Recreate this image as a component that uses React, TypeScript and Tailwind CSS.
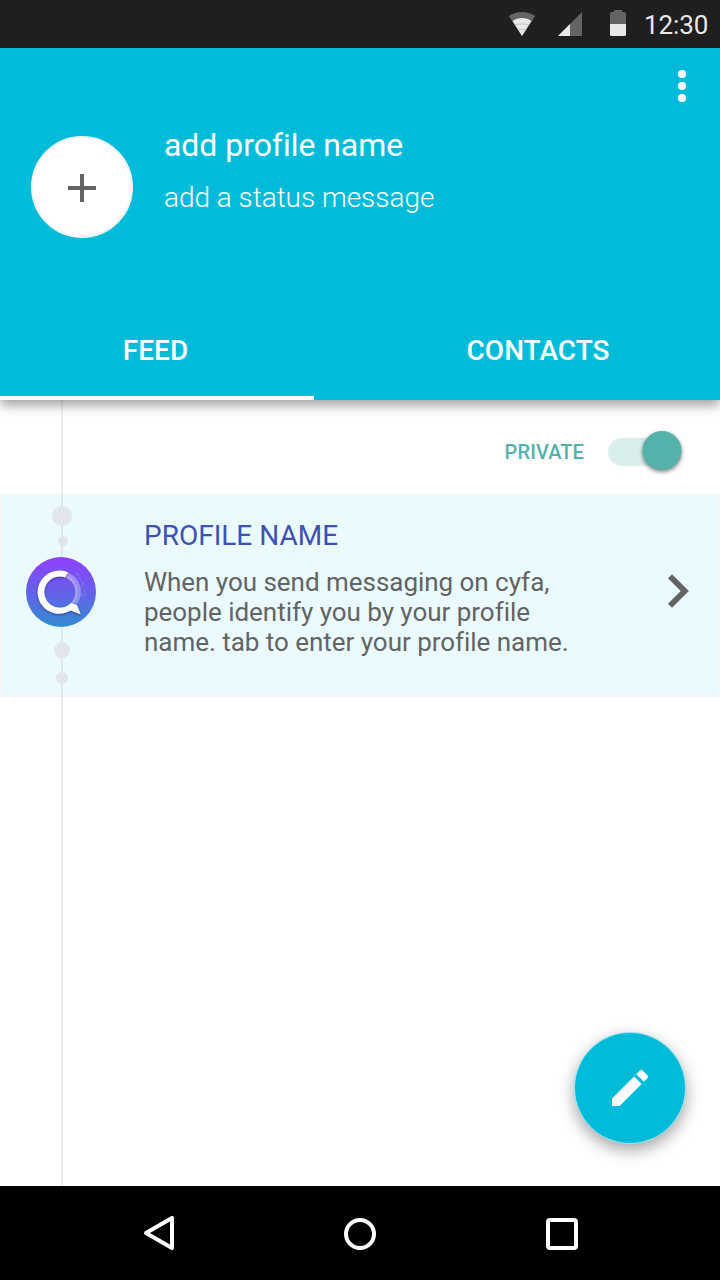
import React from "react";

function StatusBar() {
  return (
    <div className="flex h-12 shrink-0 items-center bg-[#1f1f1f] text-[#e8e8e8]">
      <svg className="ml-[508px] shrink-0" width="28" height="48" viewBox="0 0 28 48">
        <path d="M.8 15.9C4.8 13.4 9.2 12 14 12s9.2 1.400 13.200 3.900L14 36Z" fill="#646464" />
        <path d="M4.500 21C7.200 19 10.500 18 14 18s6.800 1 9.500 3L14 36Z" fill="#e8e8e8" />
        <path d="M7 24.700q7-1.800 14 0M10 30q4-1.200 8 0" fill="none" stroke="#b9b9b9" strokeWidth=".7" />
      </svg>
      <svg className="ml-[22px] shrink-0" width="24" height="48" viewBox="0 0 24 48">
        <path d="M24 12V36H0Z" fill="#646464" />
        <path d="M12 24V36H0Z" fill="#e8e8e8" />
      </svg>
      <svg className="ml-[28px] shrink-0" width="16" height="48" viewBox="0 0 16 48">
        <path d="M4 10h8v2h2.500a1.500 1.500 0 0 1 1.500 1.500V24H0V13.500A1.500 1.500 0 0 1 1.500 12H4Z" fill="#646464" />
        <path d="M0 24h16v10.500a1.500 1.500 0 0 1-1.500 1.500h-13A1.500 1.500 0 0 1 0 34.500Z" fill="#e8e8e8" />
      </svg>
      <span className="ml-[18px] pt-[2px] text-[26px] leading-[48px] tracking-[-0.1px]">12:30</span>
    </div>
  );
}

function Header() {
  return (
    <header className="relative z-10 flex h-[352px] shrink-0 flex-col bg-[#00bcd9] text-white shadow-[0_6px_10px_0_rgba(0,0,0,0.34)]">
      <div className="flex h-[77px] justify-end pt-[22px] pr-[34px]">
        <button aria-label="More options" className="flex h-8 w-2 flex-col gap-1">
          <span className="size-2 shrink-0 rounded-full bg-white" />
          <span className="size-2 shrink-0 rounded-full bg-white" />
          <span className="size-2 shrink-0 rounded-full bg-white" />
        </button>
      </div>
      <div className="flex h-[175px] pl-[31px]">
        <button
          aria-label="Add photo"
          className="mt-[11px] flex size-[102px] shrink-0 items-center justify-center rounded-full border-2 border-[#f3f3f3] bg-white pt-[2px]"
        >
          <svg width="28" height="28" viewBox="0 0 28 28">
            <path d="M12 0h4v12h12v4H16v12h-4V16H0v-4h12Z" fill="#636363" />
          </svg>
        </button>
        <div className="ml-[31px]">
          <h1 className="text-[32px] leading-10 tracking-[-0.05px]">add profile name</h1>
          <p className="mt-[15px] text-[28px] leading-9 font-light tracking-[-0.04px]">add a status message</p>
        </div>
      </div>
      <nav className="flex h-[100px] text-[28px] font-medium">
        <button className="flex w-[314px] items-center justify-center border-b-4 border-white pt-[6px] pr-[3px]">
          FEED
        </button>
        <button className="flex flex-1 items-center justify-center pt-[2px] pl-[42px]">CONTACTS</button>
      </nav>
    </header>
  );
}

function Logo() {
  return (
    <svg className="block size-[70px]" viewBox="0 0 70 70">
      <defs>
        <linearGradient id="disc" x1="0" y1="0" x2="0" y2="1">
          <stop offset="0" stopColor="#9140ff" />
          <stop offset=".5" stopColor="#6560e9" />
          <stop offset="1" stopColor="#318dd1" />
        </linearGradient>
        <linearGradient id="fade" x1="0" y1="0" x2="0" y2="1">
          <stop offset="0" stopColor="#fff" stopOpacity=".35" />
          <stop offset="1" stopColor="#fff" stopOpacity=".25" />
        </linearGradient>
        <filter id="soft" x="-20%" y="-20%" width="140%" height="140%">
          <feDropShadow dx="0" dy="1" stdDeviation=".8" floodColor="#20205c" floodOpacity=".6" />
        </filter>
      </defs>
      <circle cx="35" cy="35" r="35" fill="url(#disc)" />
      <path d="M42 15.400A21.600 21.600 0 0 1 51 47.600L45 46A15.600 15.600 0 0 0 39 20.300Z" fill="url(#fade)" />
      <path d="M40.500 18.500A18.300 18.300 0 0 1 47.500 46.500L45 46A15.600 15.600 0 0 0 39 20.300Z" fill="#fff" fillOpacity=".22" />
      <path
        d="M42 15.400A21.600 21.600 0 1 0 44.500 53.600L54.700 57.300 50.900 48 45 46A15.600 15.600 0 1 1 39 20.300Z"
        fill="#fff"
        filter="url(#soft)"
      />
      <path
        d="m50.500 16 1.200 3m.6 1.500 1 1.800m-1-6 .8 2m1.200 4 .8 2m.8 1.500.7 2.500m-1.400 1 .5 1.800m1-6 .5 2m2.100 5-1.200 3m-2 1v3m1.800 0-.4 1.800m2-5-.6 2.200"
        fill="none"
        stroke="#b3b1f7"
        strokeOpacity=".55"
        strokeWidth=".7"
      />
    </svg>
  );
}

function FeedItem() {
  return (
    <article className="flex h-[204px] shrink-0 border-2 border-[#f5f6f6] bg-[#eafaff]">
      <div className="relative z-10 ml-[24px] flex w-[70px] flex-col items-center pt-[11px]">
        <span className="ml-[2px] size-5 rounded-full bg-[#e2e5ee]" />
        <span className="mt-[10px] ml-[4px] size-[10px] rounded-full bg-[#e2e5ee]" />
        <div className="mt-[11px]">
          <Logo />
        </div>
        <span className="mt-[15px] ml-[2px] size-4 rounded-full bg-[#e2e5ee]" />
        <span className="mt-[14px] ml-[2px] size-3 rounded-full bg-[#e2e5ee]" />
      </div>
      <div className="ml-[48px] w-[460px] pt-[23px]">
        <h2 className="text-[28px] leading-9 text-[#3f51b5]">PROFILE NAME</h2>
        <p className="mt-[13px] text-[26px] leading-[30px] tracking-[-0.03px] text-[#646464]">
          When you send messaging on cyfa,
          <br />
          people identify you by your profile
          <br />
          name. tab to enter your profile name.
        </p>
      </div>
      <svg className="mt-[78px] ml-[62px] shrink-0" width="26" height="36" viewBox="0 0 26 36">
        <path d="M4 3.200 18.800 18 4 32.800" fill="none" stroke="#646464" strokeWidth="5.800" />
      </svg>
    </article>
  );
}

function Feed() {
  return (
    <main className="relative flex flex-1 flex-col bg-white">
      <div className="absolute top-0 left-[61px] h-full w-[2px] bg-black/[0.07]" />
      <div className="flex h-[93px] shrink-0 justify-end pr-[38px]">
        <span className="mt-[36px] mr-6 text-[20px] leading-8 font-medium tracking-[0.1px] text-[#54b2ab]">PRIVATE</span>
        <button
          role="switch"
          aria-checked="true"
          aria-label="Private"
          className="mt-[38px] flex h-7 w-[74px] items-center justify-end rounded-full bg-[#daefed]"
        >
          <svg className="-mt-[3px] -mr-[4px] overflow-visible" width="48" height="48" viewBox="0 0 48 48">
            <circle
              className="drop-shadow-[0_2px_2px_rgba(0,0,0,0.5)]"
              cx="24"
              cy="23.500"
              r="19.500"
              fill="#54b2ab"
            />
          </svg>
        </button>
      </div>
      <FeedItem />
      <button
        aria-label="Compose"
        className="absolute right-[34px] bottom-[42px] flex size-[112px] items-center justify-center rounded-full border-[0.5px] border-white/60 bg-[#00bcd9] shadow-[0_6px_16px_rgba(0,0,0,0.36)]"
      >
        <svg width="48" height="48" viewBox="0 0 24 24" fill="#fff">
          <path d="M3 17.250V21h3.750L17.810 9.940l-3.750-3.750L3 17.250zM20.710 7.040a1 1 0 0 0 0-1.410l-2.340-2.340a1 1 0 0 0-1.410 0l-1.830 1.830 3.750 3.750 1.830-1.830z" />
        </svg>
      </button>
    </main>
  );
}

function NavigationBar() {
  return (
    <footer className="flex h-[94px] shrink-0 items-center justify-between bg-black pr-[142px] pl-[144px]">
      <svg className="mt-[2px]" width="30" height="36" viewBox="0 0 30 36">
        <path d="M2 17 28 2v30Z" fill="none" stroke="#fff" strokeWidth="4" strokeLinejoin="round" />
      </svg>
      <svg className="mt-[2px]" width="32" height="32" viewBox="0 0 32 32">
        <circle cx="16" cy="16" r="14" fill="none" stroke="#fff" strokeWidth="4" />
      </svg>
      <svg className="mt-[2px]" width="32" height="32" viewBox="0 0 32 32">
        <rect x="2" y="2" width="28" height="28" rx="2" fill="none" stroke="#fff" strokeWidth="4" />
      </svg>
    </footer>
  );
}

export default function App() {
  return (
    <div className="flex h-[1280px] w-[720px] flex-col overflow-hidden bg-white font-[Roboto,sans-serif] [font-variant-ligatures:none]">
      <StatusBar />
      <Header />
      <Feed />
      <NavigationBar />
    </div>
  );
}
